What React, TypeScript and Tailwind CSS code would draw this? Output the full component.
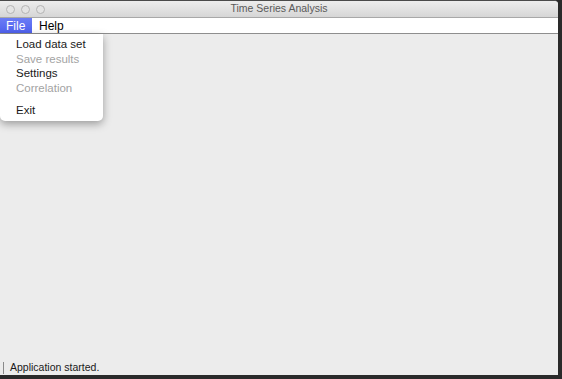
import React from 'react'

const FONT = { fontFamily: '"Liberation Sans", Arial, sans-serif' }

function MenuItem({ label, disabled }: { label: string; disabled?: boolean }) {
  return (
    <div className={`h-[14.5px] leading-[14.5px] pl-4 text-[11.5px] ${disabled ? 'text-[#a3a3a3]' : 'text-[#1a1a1a]'}`}>
      {label}
    </div>
  )
}

export default function App() {
  return (
    <div className="w-[562px] h-[379px] bg-[#2a2a2a] relative overflow-hidden" style={FONT}>
      <div className="w-[558px] h-[375px] flex flex-col bg-[#ececec] rounded-tr-[4px] overflow-hidden border-t border-[#4a4a4a]">
        {/* title bar */}
        <div className="h-[16px] shrink-0 relative flex items-center bg-gradient-to-b from-[#ededed] to-[#d6d6d6]">
          <div className="flex gap-[6px] pl-[6px]">
            <span className="w-[9px] h-[9px] rounded-full border border-[#b4b4b4] bg-[#e4e4e4]" />
            <span className="w-[9px] h-[9px] rounded-full border border-[#b4b4b4] bg-[#e4e4e4]" />
            <span className="w-[9px] h-[9px] rounded-full border border-[#b4b4b4] bg-[#e4e4e4]" />
          </div>
          <div className="absolute inset-0 flex items-center justify-center text-[10.5px] text-[#5a5a5a]">
            Time Series Analysis
          </div>
        </div>
        {/* menu bar */}
        <div className="h-[17px] shrink-0 bg-white border-t border-[#a8a8a8] border-b border-b-[#8e8e8e] flex items-stretch text-[12px]">
          <div className="w-[32px] bg-gradient-to-b from-[#6b7cf5] to-[#4f61ee] text-white flex items-center pl-[6px] pt-px">File</div>
          <div className="flex items-center pl-[7px] pt-px text-black">Help</div>
        </div>
        {/* content */}
        <div className="flex-1 relative bg-[#ececec]">
          <div className="absolute left-0 top-0 w-[103px] h-[87px] bg-white rounded-b-[5px] shadow-[0_3px_8px_rgba(0,0,0,0.35)] pt-[3px]">
            <MenuItem label="Load data set" />
            <MenuItem label="Save results" disabled />
            <MenuItem label="Settings" />
            <MenuItem label="Correlation" disabled />
            <div className="h-[8px]" />
            <MenuItem label="Exit" />
          </div>
        </div>
        {/* status bar */}
        <div className="h-[14px] shrink-0 flex items-center text-[10.5px] text-[#1a1a1a]">
          <span className="w-px h-[12px] bg-[#8a8a8a] ml-[3px] mr-[6px]" />
          Application started.
        </div>
      </div>
    </div>
  )
}
